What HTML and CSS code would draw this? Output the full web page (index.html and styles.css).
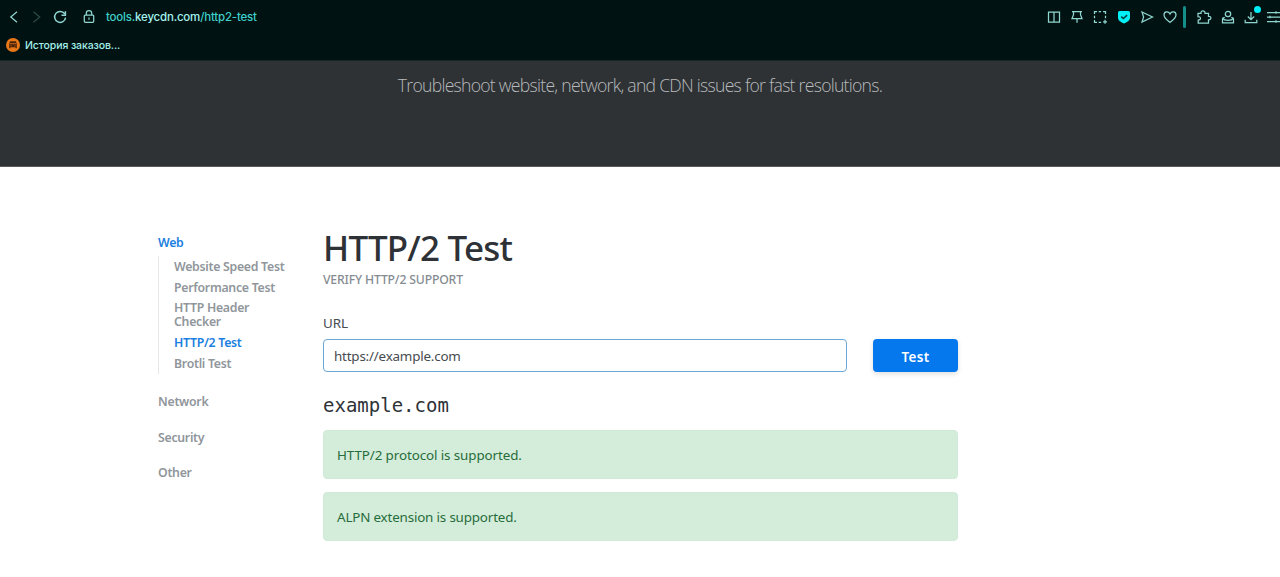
FILE: index.html
```html
<!DOCTYPE html>
<html lang="en">
<head>
<meta charset="utf-8">
<title>HTTP/2 Test</title>
<link rel="stylesheet" href="styles.css">
</head>
<body>
<header class="browser">
  <div class="toolbar">
    <nav class="nav-buttons">
      <svg class="icon" viewBox="0 0 16 16"><path d="M11 2.800 4.800 8l6.200 5.200"/></svg>
      <svg class="icon icon-off" viewBox="0 0 16 16"><path d="M4.500 2.800 10.700 8l-6.200 5.200"/></svg>
      <svg class="icon icon-reload" viewBox="0 0 16 16"><path d="M12.700 4.800A5.500 5.500 0 1 0 13.600 8.600M13.400 2.200v4H9.500"/></svg>
      <svg class="icon icon-lock" viewBox="0 0 16 16"><rect x="3.300" y="6" width="9.400" height="7.300" rx="1"/><path d="M5.300 6V4.200a2.700 2.700 0 0 1 5.400 0V6M8 8.600v2.200"/></svg>
    </nav>
    <div class="address"><span>tools.</span><b>keycdn.com</b><span>/http2-test</span></div>
    <div class="tools">
      <svg class="icon" viewBox="0 0 16 16"><path d="M2.500 3h11v10h-11zM8 3v10"/></svg>
      <svg class="icon" viewBox="0 0 16 16"><path d="M3 2.600h10M4.500 2.600v3L3 9.600h10l-1.500-4v-3M8 9.600v4.200"/></svg>
      <svg class="icon" viewBox="0 0 16 16"><path d="M2.500 5V2.600H5M6.700 2.600h2.400M11 2.600h2.500V5M2.500 6.800v2.400M2.500 11v2.400H5M6.700 13.400h2.400M13.500 6.800v2.400M13 10.800v4M11 12.800h4"/></svg>
      <svg class="icon" viewBox="0 0 16 16"><path class="shield" d="M3.500 2h9A1.500 1.500 0 0 1 14 3.500V9c0 2.400-3 4.200-6 5.400C5 13.200 2 11.400 2 9V3.500A1.500 1.500 0 0 1 3.500 2z"/><path class="check" d="m5.200 7.600 2.200 2 3.700-3.500"/></svg>
      <svg class="icon" viewBox="0 0 16 16"><path d="M3 3l10.500 5L3 13l1.600-5z"/></svg>
      <svg class="icon" viewBox="0 0 16 16"><path d="M8 13.400C5.500 11.400 2 9 2 5.900 2 2.400 6.500 1.900 8 5c1.500-3.100 6-2.600 6 .9 0 3.100-3.500 5.500-6 7.500z"/></svg>
      <span class="divider"></span>
      <svg class="icon" viewBox="0 0 16 16"><path d="M2 4.300h3c-.5-3.300 4.400-3.300 4 0h3.500v3c3.200-.2 3.200 3.800 0 3.500v3.200H2.200v-3C5.500 11 5 7.300 2 7.700z"/></svg>
      <svg class="icon" viewBox="0 0 16 16"><circle cx="8" cy="5" r="2.700"/><path d="M4.800 8.500H4a1.500 1.500 0 0 0-1.500 1.500v3.800h11V10A1.500 1.500 0 0 0 12 8.500h-.8M2.500 9.500c2 2.500 9 2.500 11 0"/></svg>
      <span class="download">
        <svg class="icon" viewBox="0 0 16 16"><path d="M8 3v7.500M4.800 7.500 8 10.600l3.200-3.100M2.200 10.800v2.700h11.600v-2.700"/></svg>
        <i class="dot"></i>
      </span>
      <svg class="icon" viewBox="0 0 16 16"><path d="M1 3.500h15M1 8h15M1 12.500h15M10 2.200v2.600M4 6.700v2.600M10 11.200v2.600"/></svg>
    </div>
  </div>
  <div class="bookmarks">
    <svg class="bookmark-icon" viewBox="0 0 14 14"><circle cx="7" cy="7" r="7"/><path d="M4 3.300h6l.8 3.200v3.800H9.500v-1h-5v1H3.200V6.500z"/><path class="grille" d="M4 5.700h6M4.500 7.800h1M8.500 7.800h1"/></svg>
    <span class="bookmark-label">История заказов...</span>
  </div>
</header>
<section class="hero"><p class="hero-text">Troubleshoot website, network, and CDN issues for fast resolutions.</p></section>
<main class="page">
  <aside class="sidebar">
    <a class="group active">Web</a>
    <ul class="sublist">
      <li>Website Speed Test</li>
      <li>Performance Test</li>
      <li>HTTP Header<br>Checker</li>
      <li class="active">HTTP/2 Test</li>
      <li>Brotli Test</li>
    </ul>
    <a class="group">Network</a>
    <a class="group">Security</a>
    <a class="group">Other</a>
  </aside>
  <div class="content">
    <h1 class="title">HTTP/2 Test</h1>
    <p class="subtitle">VERIFY HTTP/2 SUPPORT</p>
    <label class="label" for="url">URL</label>
    <form class="form">
      <input class="input" id="url" type="text" value="https://example.com">
      <button class="button" type="button">Test</button>
    </form>
    <h2 class="result">example.com</h2>
    <div class="alert">HTTP/2 protocol is supported.</div>
    <div class="alert alert-alpn">ALPN extension is supported.</div>
  </div>
</main>
</body>
</html>
```
FILE: styles.css
```css
* { box-sizing: border-box; }
body { margin: 0; background: #fff; color: #2e3236; font-family: "Noto Sans", "Open Sans", sans-serif; overflow: hidden; }
p, h1, h2, ul { margin: 0; padding: 0; }

.browser { height: 61px; background: #001211; border-bottom: 1px solid #192426; overflow: hidden; }
.toolbar { display: flex; align-items: center; height: 34px; padding-left: 6px; }
.nav-buttons { display: flex; gap: 7px; }
.icon { display: block; flex: none; width: 16px; height: 16px; fill: none; stroke: #8fd6d0; stroke-width: 1.25; }
.icon-off { stroke: #2c4b49; }
.icon-reload { stroke-width: 1.500; }
.icon-lock { margin-left: 6px; }
.address { flex: 1; margin-left: 9px; font: 500 11.500px/16px Inter, sans-serif; letter-spacing: -.2px; color: #3fcfc9; white-space: nowrap; }
.address b { font-weight: 500; color: #a5f3ee; }
.tools { display: flex; align-items: center; gap: 7.400px; flex: none; width: 234.500px; overflow: visible; }
.shield { fill: #00f0f5; stroke: none; }
.check { stroke: #00403f; stroke-width: 1.500; }
.divider { flex: none; width: 3px; height: 22px; margin: 0 3px 0 -3px; background: #138e8b; border-radius: 2px; }
.download { position: relative; }
.dot { position: absolute; top: -3px; right: -2px; width: 7px; height: 7px; border-radius: 50%; background: #00eef5; }
.bookmarks { display: flex; align-items: center; gap: 5px; height: 22px; padding-left: 6px; }
.bookmark-icon { width: 14px; height: 14px; fill: #e97818; }
.bookmark-icon path { fill: #4a230b; }
.bookmark-icon .grille { fill: none; stroke: #e97818; stroke-width: .8; }
.bookmark-label { padding-top: 1px; font: 500 10.500px/16px Inter, sans-serif; letter-spacing: -.1px; color: #a5efea; white-space: nowrap; }

.hero { height: 106px; padding-top: 11px; background: #2e3235; border-bottom: 1px solid #55595b; text-align: center; }
.hero-text { font: 300 17.600px/26px "Open Sans", sans-serif; letter-spacing: -.73px; color: #b8babc; white-space: nowrap; }

.page { display: flex; padding: 65px 0 0 158px; }
.sidebar { width: 165px; padding-top: 1px; font-size: 12.300px; font-weight: 600; letter-spacing: -.28px; color: #90969b; white-space: nowrap; }
.group { display: block; height: 20px; margin-bottom: 15.700px; line-height: 20px; }
.group.active { margin-bottom: 3px; }
.active { color: #1a7fe0; }
.sublist { list-style: none; height: 118px; margin-bottom: 18px; padding: 4px 0 0 15px; border-left: 1px solid #e5e7e9; line-height: 14px; }
.sublist li { margin-bottom: 6.700px; }

.content { width: 635px; }
.title { height: 35px; font-size: 35px; font-weight: 500; line-height: 31px; letter-spacing: -.8px; white-space: nowrap; }
.subtitle { margin-top: 3px; font-size: 12.200px; font-weight: 500; line-height: 20px; letter-spacing: -.15px; color: #858b91; }
.label { display: block; margin-top: 23px; font-size: 13.400px; line-height: 20px; color: #464b50; }
.form { display: flex; justify-content: space-between; margin-top: 6px; }
.input { width: 524px; height: 33px; padding: 1px 11px 0 10px; border: 1px solid #6ba8d6; border-radius: 4px; font: 400 13.400px/20px "Noto Sans", sans-serif; letter-spacing: -.2px; color: #464b50; outline: none; }
.button { width: 85px; height: 33px; padding: 2px 0 0; border: 0; border-radius: 4px; background: #0678ee; box-shadow: 0 2px 5px rgba(0, 0, 0, .13); color: #fff; font: 600 13.400px/20px "Noto Sans", sans-serif; letter-spacing: .3px; }
.result { margin-top: 20px; font: 400 19px/26px "DejaVu Sans Mono", monospace; }
.alert { height: 49px; margin-top: 12px; padding: 14px 13px 0; border: 1px solid #d0ead8; border-radius: 4px; background: #d4edda; color: #276c3b; font-size: 13.400px; line-height: 20px; letter-spacing: -.1px; }
.alert-alpn { margin-top: 13px; letter-spacing: -.17px; }
```
